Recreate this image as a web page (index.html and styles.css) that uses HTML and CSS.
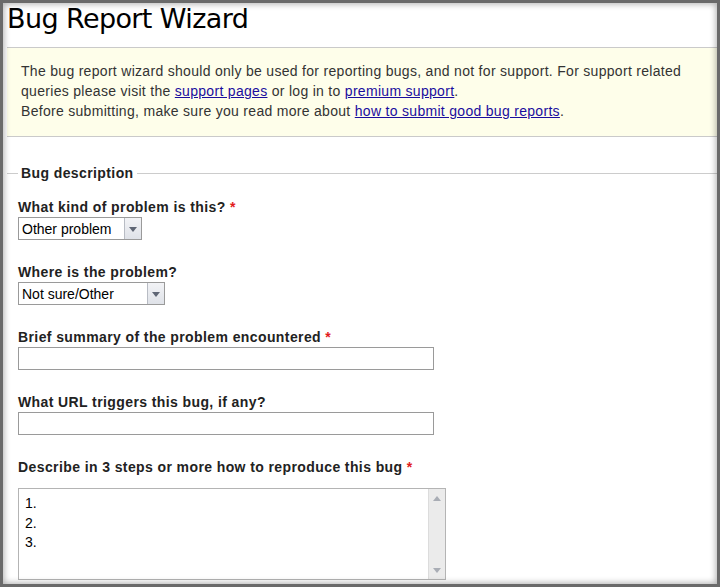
FILE: index.html
```html
<!DOCTYPE html>
<html>
<head>
<meta charset="utf-8">
<title>Bug Report Wizard</title>
<link rel="stylesheet" href="styles.css">
</head>
<body>
<div class="page">
  <h1 class="title">Bug Report Wizard</h1>
  <div class="notice">
    <p>The bug report wizard should only be used for reporting bugs, and not for support. For support related queries please visit the <a href="#">support pages</a> or log in to <a href="#">premium support</a>.</p>
    <p>Before submitting, make sure you read more about <a href="#">how to submit good bug reports</a>.</p>
  </div>
  <fieldset class="section">
    <legend class="section-title">Bug description</legend>
    <div class="field">
      <label class="label">What kind of problem is this? <span class="req">*</span></label>
      <div class="select select-kind">
        <select class="select-input"><option>Other problem</option></select>
        <span class="select-btn"><span class="tri-down"></span></span>
      </div>
    </div>
    <div class="field">
      <label class="label">Where is the problem?</label>
      <div class="select select-where">
        <select class="select-input"><option>Not sure/Other</option></select>
        <span class="select-btn"><span class="tri-down"></span></span>
      </div>
    </div>
    <div class="field">
      <label class="label">Brief summary of the problem encountered <span class="req">*</span></label>
      <input class="text-input" type="text">
    </div>
    <div class="field">
      <label class="label">What URL triggers this bug, if any?</label>
      <input class="text-input" type="text">
    </div>
    <div class="field">
      <label class="label label-steps">Describe in 3 steps or more how to reproduce this bug <span class="req">*</span></label>
      <div class="textbox">
        <textarea class="textbox-input">1.
2.
3.</textarea>
        <div class="scrollbar">
          <span class="tri-up-s"></span>
          <span class="tri-down-s"></span>
        </div>
      </div>
    </div>
  </fieldset>
</div>
<div class="frame"></div>
</body>
</html>
```
FILE: styles.css
```css
html, body {
  margin: 0;
  padding: 0;
  width: 720px;
  height: 587px;
  overflow: hidden;
  background: #fff;
}
body {
  position: relative;
  font-family: "Liberation Sans", Arial, sans-serif;
  color: #333;
}
.page {
  padding: 3px 3px 0 7px;
}
.title {
  margin: 0 0 12px;
  font-family: "DejaVu Sans", Tahoma, sans-serif;
  font-weight: normal;
  font-size: 27px;
  line-height: 32px;
  color: #000;
  letter-spacing: -0.6px;
}
.notice {
  background: #fefeea;
  border-top: 1px solid #cacaca;
  border-bottom: 1px solid #cacaca;
  padding: 13px 14px 15px;
  font-size: 14px;
  line-height: 20px;
  letter-spacing: 0.3px;
  color: #333;
}
.notice p {
  margin: 0;
}
.notice a {
  color: #1a0d9e;
  text-decoration: underline;
}
.section {
  margin: 27px 0 0;
  padding: 16px 11px 0;
  border: 0;
  border-top: 1px solid #cccccc;
  min-width: 0;
}
.section-title {
  padding: 0 3px;
  font-weight: bold;
  font-size: 14px;
  line-height: 18px;
  letter-spacing: 0.4px;
  color: #222;
}
.field {
  margin-bottom: 23px;
}
.label {
  display: block;
  font-weight: bold;
  font-size: 14px;
  line-height: 18px;
  letter-spacing: 0.4px;
  color: #222;
  margin-bottom: 1px;
}
.label-steps {
  margin-bottom: 12px;
}
.req {
  color: #e21c1c;
}
.select {
  position: relative;
  display: flex;
  height: 23px;
  box-sizing: border-box;
  border: 1px solid #9a9a9a;
  background: #fff;
}
.select-kind { width: 124px; }
.select-where { width: 147px; }
.select-input {
  flex: 1;
  min-width: 0;
  appearance: none;
  -webkit-appearance: none;
  border: 0;
  outline: 0;
  margin: 0;
  padding: 0 0 0 3px;
  background: #fff;
  font-family: "Liberation Sans", Arial, sans-serif;
  font-size: 14px;
  color: #000;
}
.select-btn {
  width: 16px;
  flex: none;
  border-left: 1px solid #b8bcc4;
  background: linear-gradient(#f2f3f6, #dfe2e8);
  display: flex;
  align-items: center;
  justify-content: center;
}
.tri-down {
  width: 0;
  height: 0;
  border-left: 4px solid transparent;
  border-right: 4px solid transparent;
  border-top: 5px solid #5f6675;
  margin-top: 1px;
}
.text-input {
  display: block;
  width: 416px;
  height: 23px;
  box-sizing: border-box;
  margin: 0;
  border: 1px solid #9a9a9a;
  padding: 0 3px;
  font-family: "Liberation Sans", Arial, sans-serif;
  font-size: 14px;
  outline: 0;
}
.textbox {
  display: flex;
  width: 428px;
  height: 92px;
  box-sizing: border-box;
  border: 1px solid #b4b4b4;
  background: #fff;
}
.textbox-input {
  flex: 1;
  min-width: 0;
  border: 0;
  outline: 0;
  resize: none;
  margin: 0;
  padding: 5px 6px;
  font-family: "Liberation Sans", Arial, sans-serif;
  font-size: 14px;
  line-height: 19.5px;
  color: #000;
  overflow: hidden;
}
.scrollbar {
  width: 17px;
  flex: none;
  background: #ebebeb;
  border-left: 1px solid #dcdcdc;
  display: flex;
  flex-direction: column;
  justify-content: space-between;
  align-items: center;
  padding: 7px 0 6px;
  box-sizing: border-box;
}
.tri-up-s {
  width: 0;
  height: 0;
  border-left: 4px solid transparent;
  border-right: 4px solid transparent;
  border-bottom: 5px solid #a9adb5;
}
.tri-down-s {
  width: 0;
  height: 0;
  border-left: 4px solid transparent;
  border-right: 4px solid transparent;
  border-top: 5px solid #a9adb5;
}
.frame {
  position: absolute;
  inset: 0;
  border: 3px solid #6a6a6a;
  box-shadow: inset 0 0 6px 1px rgba(0, 0, 0, 0.32);
  pointer-events: none;
}
```
